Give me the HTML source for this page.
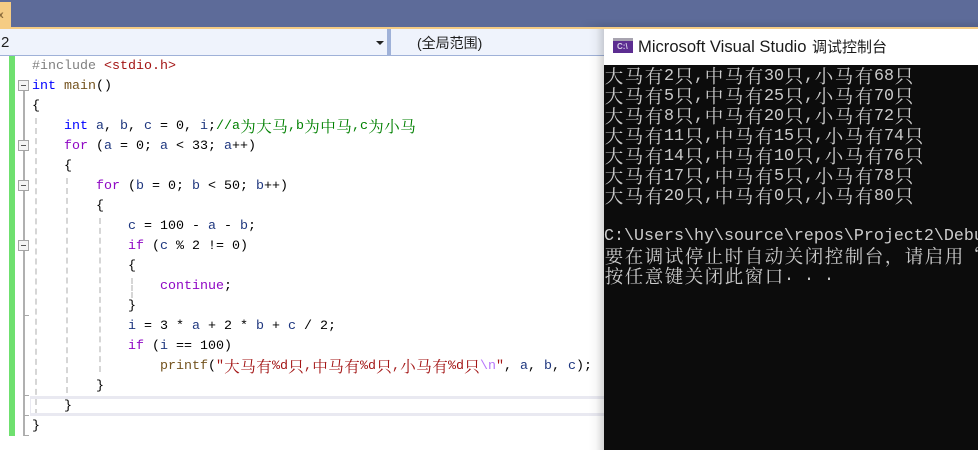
<!DOCTYPE html>
<html><head><meta charset="utf-8">
<style>
html,body{margin:0;padding:0;width:978px;height:450px;overflow:hidden;background:#fff}
.a{position:absolute}
#code div{position:absolute;left:32px;height:20px;white-space:pre;font:13.33px/20px "Liberation Mono","Noto Serif CJK SC",monospace;color:#000}
#code i{font-style:normal;display:inline-block;width:16px;text-align:center;font-size:15.5px;font-family:"Noto Serif CJK SC",serif;line-height:20px;vertical-align:top;position:relative;top:-1px}
.k{color:#00f}.p{color:#8f08c4}.v{color:#1f377f}.f{color:#74531f}.s{color:#a31515}.c{color:#008000}.g{color:#808080}.e{color:#b776fb}
.fb{position:absolute;left:18px;width:9px;height:9px;border:1px solid #a5a5a5;background:#f4f4f4}
.fb:after{content:"";position:absolute;left:2px;top:4px;width:5px;height:1px;background:#555}
.gl{position:absolute;width:0;border-left:2px dashed #d6d6d6}
.fl{position:absolute;left:23px;width:2px;background:#b0b0b0}
.ft{position:absolute;left:24px;width:5px;height:1px;background:#a8a8a8}
#con{position:absolute;left:604px;top:65px;width:374px;height:385px;background:#0c0c0c;overflow:hidden}
#con div{position:absolute;left:0;height:20px;white-space:pre;font:16.67px/20px "Liberation Mono","Noto Serif CJK SC",monospace;color:#ccc}
#con i{font-style:normal;display:inline-block;width:20px;text-align:center;font-size:18.5px;font-family:"Noto Serif CJK SC",serif;line-height:20px;vertical-align:top;position:relative;top:-1px}
</style></head><body>
<div class="a" style="left:0;top:0;width:978px;height:27px;background:#5d6b99"></div>
<div class="a" style="left:0;top:2px;width:11px;height:25px;background:#f5cc84"></div>
<div class="a" style="left:-2px;top:10px;font:bold 10px/12px 'Liberation Sans',sans-serif;color:#8a6a3a">x</div>
<div class="a" style="left:0;top:27px;width:978px;height:2px;background:#f5cc84"></div>
<div class="a" style="left:0;top:29px;width:604px;height:26px;background:#eff3fc"></div>
<div class="a" style="left:0;top:55px;width:604px;height:1px;background:#9fb1d8"></div>
<div class="a" style="left:387px;top:29px;width:4px;height:26px;background:#9fb1d8"></div>
<div class="a" style="left:1px;top:33px;font:15px/20px 'Liberation Sans',sans-serif;color:#1e1e1e">2</div>
<div class="a" style="left:376px;top:41px;width:0;height:0;border-left:4px solid transparent;border-right:4px solid transparent;border-top:4px solid #222"></div>
<div class="a" style="left:417px;top:33px;font:14px/20px 'Liberation Sans','WenQuanYi Zen Hei',sans-serif;color:#1e1e1e;white-space:pre">(全局范围)</div>

<div class="a" style="left:9px;top:56px;width:6px;height:380px;background:#6fe06f"></div>
<div class="fl" style="top:91px;height:345px"></div>
<div class="fb" style="top:80px"></div>
<div class="fb" style="top:140px"></div>
<div class="fb" style="top:180px"></div>
<div class="fb" style="top:240px"></div>
<div class="ft" style="top:315px"></div>
<div class="ft" style="top:395px"></div>
<div class="ft" style="top:415px"></div>
<div class="ft" style="top:435px"></div>
<div class="gl" style="left:35px;top:118px;height:297px"></div>
<div class="gl" style="left:66px;top:178px;height:215px"></div>
<div class="gl" style="left:99px;top:218px;height:154px"></div>
<div class="gl" style="left:131px;top:278px;height:20px"></div>
<div class="a" style="left:30px;top:396px;width:574px;height:14px;border-top:3px solid #e9e9f1;border-bottom:3px solid #e9e9f1;border-left:1px solid #e9e9f1"></div>

<div id="code">
<div style="top:57px"><span class="g">#include </span><span class="s">&lt;stdio.h&gt;</span></div>
<div style="top:77px"><span class="k">int</span> <span class="f">main</span>()</div>
<div style="top:97px">{</div>
<div style="top:117px">    <span class="k">int</span> <span class="v">a</span>, <span class="v">b</span>, <span class="v">c</span> = 0, <span class="v">i</span>;<span class="c">//a<i>为</i><i>大</i><i>马</i>,b<i>为</i><i>中</i><i>马</i>,c<i>为</i><i>小</i><i>马</i></span></div>
<div style="top:137px">    <span class="p">for</span> (<span class="v">a</span> = 0; <span class="v">a</span> &lt; 33; <span class="v">a</span>++)</div>
<div style="top:157px">    {</div>
<div style="top:177px">        <span class="p">for</span> (<span class="v">b</span> = 0; <span class="v">b</span> &lt; 50; <span class="v">b</span>++)</div>
<div style="top:197px">        {</div>
<div style="top:217px">            <span class="v">c</span> = 100 - <span class="v">a</span> - <span class="v">b</span>;</div>
<div style="top:237px">            <span class="p">if</span> (<span class="v">c</span> % 2 != 0)</div>
<div style="top:257px">            {</div>
<div style="top:277px">                <span class="p">continue</span>;</div>
<div style="top:297px">            }</div>
<div style="top:317px">            <span class="v">i</span> = 3 * <span class="v">a</span> + 2 * <span class="v">b</span> + <span class="v">c</span> / 2;</div>
<div style="top:337px">            <span class="p">if</span> (<span class="v">i</span> == 100)</div>
<div style="top:357px">                <span class="f">printf</span>(<span class="s">"<i>大</i><i>马</i><i>有</i>%d<i>只</i>,<i>中</i><i>马</i><i>有</i>%d<i>只</i>,<i>小</i><i>马</i><i>有</i>%d<i>只</i></span><span class="e">\n</span><span class="s">"</span>, <span class="v">a</span>, <span class="v">b</span>, <span class="v">c</span>);</div>
<div style="top:377px">        }</div>
<div style="top:397px">    }</div>
<div style="top:417px">}</div>
</div>

<div class="a" style="left:588px;top:29px;width:16px;height:421px;background:linear-gradient(to right,rgba(0,0,0,0),rgba(0,0,0,.03) 50%,rgba(0,0,0,.16))"></div>
<div class="a" style="left:580px;top:19px;width:398px;height:8px;background:linear-gradient(to bottom,rgba(0,0,0,0),rgba(0,0,0,.1));-webkit-mask-image:linear-gradient(to right,transparent,#000 24px);mask-image:linear-gradient(to right,transparent,#000 24px)"></div>
<div class="a" style="left:604px;top:29px;width:374px;height:36px;background:#fff"></div>
<div class="a" style="left:613px;top:38px;width:20px;height:15px;background:#5c2d91"></div>
<div class="a" style="left:613px;top:38px;width:20px;height:3px;background:#a8a4b0"></div>
<div class="a" style="left:617px;top:42px;font:bold 8px/10px 'Liberation Sans',sans-serif;color:#d8d0e8;white-space:pre">C:\</div>
<div class="a" style="left:638px;top:37px;font:16.6px/20px 'Liberation Sans',sans-serif;color:#1a1a1a;white-space:pre">Microsoft Visual Studio</div>
<div class="a" style="left:812px;top:37px;font:15px/20px 'Noto Sans CJK SC',sans-serif;color:#1a1a1a;white-space:pre">调试控制台</div>

<div id="con">
<div style="top:2px"><i>大</i><i>马</i><i>有</i>2<i>只</i>,<i>中</i><i>马</i><i>有</i>30<i>只</i>,<i>小</i><i>马</i><i>有</i>68<i>只</i></div>
<div style="top:22px"><i>大</i><i>马</i><i>有</i>5<i>只</i>,<i>中</i><i>马</i><i>有</i>25<i>只</i>,<i>小</i><i>马</i><i>有</i>70<i>只</i></div>
<div style="top:42px"><i>大</i><i>马</i><i>有</i>8<i>只</i>,<i>中</i><i>马</i><i>有</i>20<i>只</i>,<i>小</i><i>马</i><i>有</i>72<i>只</i></div>
<div style="top:62px"><i>大</i><i>马</i><i>有</i>11<i>只</i>,<i>中</i><i>马</i><i>有</i>15<i>只</i>,<i>小</i><i>马</i><i>有</i>74<i>只</i></div>
<div style="top:82px"><i>大</i><i>马</i><i>有</i>14<i>只</i>,<i>中</i><i>马</i><i>有</i>10<i>只</i>,<i>小</i><i>马</i><i>有</i>76<i>只</i></div>
<div style="top:102px"><i>大</i><i>马</i><i>有</i>17<i>只</i>,<i>中</i><i>马</i><i>有</i>5<i>只</i>,<i>小</i><i>马</i><i>有</i>78<i>只</i></div>
<div style="top:122px"><i>大</i><i>马</i><i>有</i>20<i>只</i>,<i>中</i><i>马</i><i>有</i>0<i>只</i>,<i>小</i><i>马</i><i>有</i>80<i>只</i></div>
<div style="top:162px">C:\Users\hy\source\repos\Project2\Debug</div>
<div style="top:182px"><i>要</i><i>在</i><i>调</i><i>试</i><i>停</i><i>止</i><i>时</i><i>自</i><i>动</i><i>关</i><i>闭</i><i>控</i><i>制</i><i>台</i><i>，</i><i>请</i><i>启</i><i>用</i><i>“</i></div>
<div style="top:202px"><i>按</i><i>任</i><i>意</i><i>键</i><i>关</i><i>闭</i><i>此</i><i>窗</i><i>口</i>. . .</div>
</div>
</body></html>
